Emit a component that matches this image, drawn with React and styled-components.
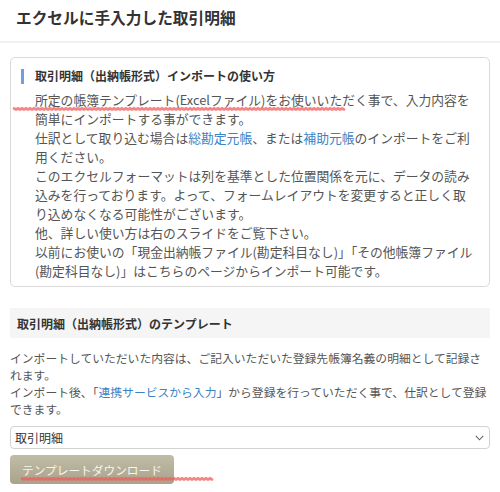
import React from 'react';
import styled, { createGlobalStyle } from 'styled-components';

const Global = createGlobalStyle`
  html, body { margin: 0; padding: 0; background: #fff; }
  body {
    font-family: "Noto Sans CJK JP", "Noto Sans", sans-serif;
    color: #555;
    -webkit-font-smoothing: antialiased;
  }
  * { box-sizing: border-box; }
`;

const Header = styled.header`
  height: 43px;
  padding: 8px 16px 0;
  border-bottom: 2px solid #f1f1f1;
`;

const Title = styled.h1`
  margin: 0;
  font-size: 15.7px;
  line-height: 19px;
  font-weight: 700;
  color: #333;
`;

const Main = styled.main`
  padding: 14px 10px 0;
`;

const Card = styled.section`
  border: 1px solid #dadada;
  border-radius: 5px;
  padding: 9px 12px 6px 10px;
`;

const CardHeading = styled.h2`
  margin: 0;
  display: flex;
  align-items: center;
  gap: 11px;
  font-size: 12px;
  line-height: 18px;
  font-weight: 700;
  color: #333;
  &::before {
    content: '';
    width: 3px;
    height: 15px;
    background: #6f9fdf;
  }
`;

const CardBody = styled.p`
  position: relative;
  margin: 5px 0 0;
  padding-left: 14px;
  font-size: 12.8px;
  line-height: 19px;
  color: #555;
`;

const Link = styled.a`
  color: #3b83c4;
  text-decoration: none;
`;

const Band = styled.h3`
  margin: 21px 0 0;
  height: 30px;
  display: flex;
  align-items: center;
  padding-left: 7px;
  background: #f5f5f5;
  font-size: 12px;
  font-weight: 700;
  color: #333;
`;

const Para = styled.p`
  margin: 11px 0 0;
  font-size: 11.8px;
  line-height: 17px;
  color: #555;
`;

const SelectWrap = styled.div`
  position: relative;
  margin-top: 9px;
`;

const Select = styled.select`
  display: block;
  width: 100%;
  height: 23px;
  appearance: none;
  -webkit-appearance: none;
  border: 1px solid #d2d2d2;
  border-radius: 4px;
  background: #fff;
  padding: 0 20px 0 4px;
  font-family: inherit;
  font-size: 12px;
  color: #333;
`;

const Chevron = styled.svg`
  position: absolute;
  right: 6px;
  top: 9px;
  width: 9px;
  height: 6px;
  pointer-events: none;
`;

const ButtonWrap = styled.div`
  position: relative;
  margin-top: 6px;
`;

const Button = styled.button`
  height: 29px;
  padding: 0 12px;
  border: none;
  border-radius: 4px;
  background: linear-gradient(#c1bca7, #a9a38b);
  color: #f6f5f0;
  font-family: inherit;
  font-size: 11.7px;
`;

const Scribble = styled.svg`
  position: absolute;
  left: ${p => p.$left}px;
  top: ${p => p.$top}px;
  overflow: visible;
  pointer-events: none;
  filter: blur(0.4px);
`;

function Squiggle({ left, top, width }) {
  let d = `M0 1.5`;
  for (let x = 2; x <= width; x += 2) {
    d += ` L${x} ${x % 4 === 0 ? 1.4 : 2.4}`;
  }
  return (
    <Scribble $left={left} $top={top} width={width} height="4">
      <path d={d} fill="none" stroke="#f25c5c" strokeWidth="2.8" strokeLinecap="round" opacity="0.75" />
    </Scribble>
  );
}

export default function App() {
  return (
    <>
      <Global />
      <Header>
        <Title>エクセルに手入力した取引明細</Title>
      </Header>
      <Main>
        <Card>
          <CardHeading>取引明細（出納帳形式）インポートの使い方</CardHeading>
          <CardBody>
            所定の帳簿テンプレート(Excelファイル)をお使いいただく事で、入力内容を簡単にインポートする事ができます。
            <br />
            仕訳として取り込む場合は<Link>総勘定元帳</Link>、または<Link>補助元帳</Link>のインポートをご利用ください。
            <br />
            このエクセルフォーマットは列を基準とした位置関係を元に、データの読み込みを行っております。よって、フォームレイアウトを変更すると正しく取り込めなくなる可能性がございます。
            <br />
            他、詳しい使い方は右のスライドをご覧下さい。
            <br />
            以前にお使いの「現金出納帳ファイル(勘定科目なし)」「その他帳簿ファイル(勘定科目なし)」はこちらのページからインポート可能です。
            <Squiggle left={-7} top={17} width={330} />
          </CardBody>
        </Card>
        <Band>取引明細（出納帳形式）のテンプレート</Band>
        <Para>
          インポートしていただいた内容は、ご記入いただいた登録先帳簿名義の明細として記録されます。
          <br />
          インポート後、「<Link>連携サービスから入力</Link>」から登録を行っていただく事で、仕訳として登録できます。
        </Para>
        <SelectWrap>
          <Select defaultValue="取引明細">
            <option>取引明細</option>
          </Select>
          <Chevron viewBox="0 0 9 6">
            <path d="M0.8 0.8 L4.5 4.8 L8.2 0.8" fill="none" stroke="#666" strokeWidth="1.1" />
          </Chevron>
        </SelectWrap>
        <ButtonWrap>
          <Button>テンプレートダウンロード</Button>
          <Squiggle left={12} top={22} width={190} />
        </ButtonWrap>
      </Main>
    </>
  );
}
